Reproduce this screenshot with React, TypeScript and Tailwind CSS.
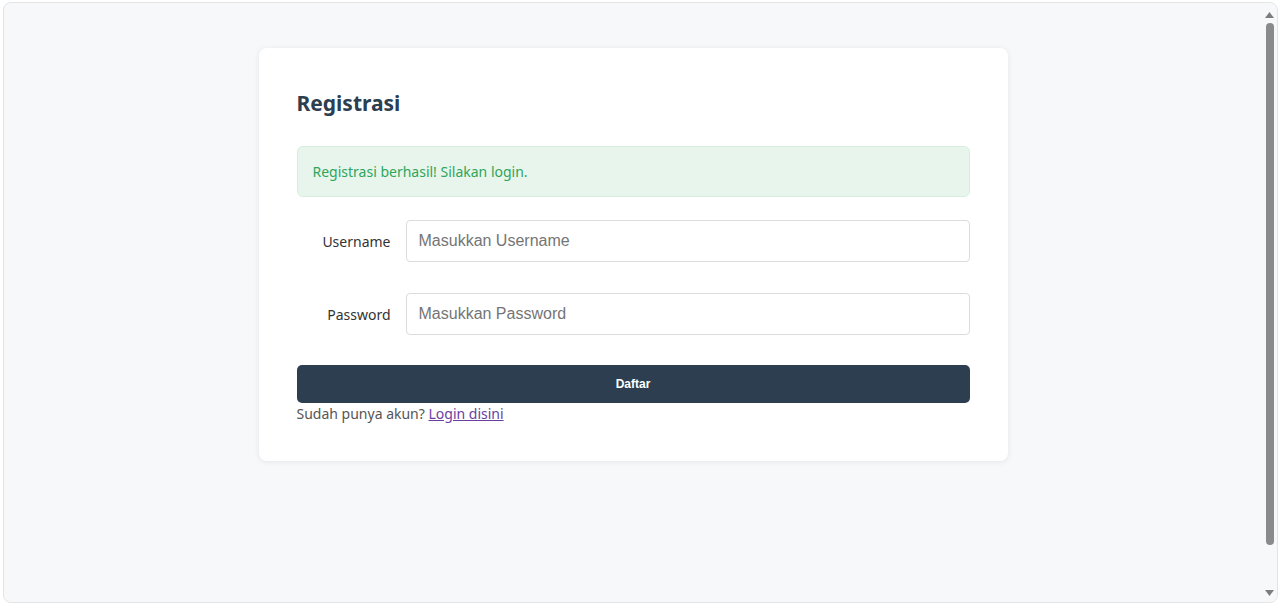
import React from "react";

export default function App() {
  return (
    <div className="h-[605px] w-[1280px] bg-white p-[2px] pl-[3px] pr-[2px]" style={{ fontFamily: '"Noto Sans", "Open Sans", sans-serif' }}>
      <div className="flex h-full w-full overflow-hidden rounded-[8px] border border-[#e3e4e6] bg-[#f7f8fa]">
        <div className="flex flex-1 justify-center pt-[45px]">
          <div className="h-[413px] w-[749px] rounded-[8px] bg-white px-[38px] pt-[40px] shadow-[0_1px_6px_rgba(0,0,0,0.08)]">
            <h2 className="text-[21px] font-bold leading-[30px] text-[#2c3e50]">Registrasi</h2>
            <div className="mt-[28px] flex h-[51px] items-center rounded-[6px] border border-[#d5eedd] bg-[#e8f5ec] px-[15px] text-[14px] text-[#2ea55a]">
              Registrasi berhasil! Silakan login.
            </div>
            <div className="mt-[23px] flex items-center gap-[15px]">
              <label className="w-[94px] text-right text-[14px] text-[#333]">Username</label>
              <input
                className="h-[42px] flex-1 rounded-[4px] border border-[#dcdcdc] px-[12px] text-[16px] text-[#333] outline-none placeholder:text-[#757575]"
                style={{ fontFamily: '"Liberation Sans", Arial, sans-serif' }}
                placeholder="Masukkan Username"
              />
            </div>
            <div className="mt-[31px] flex items-center gap-[15px]">
              <label className="w-[94px] text-right text-[14px] text-[#333]">Password</label>
              <input
                type="password"
                className="h-[42px] flex-1 rounded-[4px] border border-[#dcdcdc] px-[12px] text-[16px] text-[#333] outline-none placeholder:text-[#757575]"
                style={{ fontFamily: '"Liberation Sans", Arial, sans-serif' }}
                placeholder="Masukkan Password"
              />
            </div>
            <button
              className="mt-[30px] flex h-[38px] w-full items-center justify-center rounded-[5px] bg-[#2c3e50] text-[12px] font-bold text-white"
              style={{ fontFamily: '"Liberation Sans", Arial, sans-serif' }}
            >
              Daftar
            </button>
            <p className="text-[14px] leading-[22px] text-[#555]">
              Sudah punya akun? <a href="#" className="text-[#6a3ea1] underline">Login disini</a>
            </p>
          </div>
        </div>
        <div className="flex w-[15px] flex-col items-center bg-[#f7f8fa] py-[4px]">
          <svg width="9" height="6" viewBox="0 0 9 6" className="mt-[5px]"><path d="M0 6 L4.5 0 L9 6 Z" fill="#7d7d7d" /></svg>
          <div className="mt-[5px] h-[522px] w-[8px] rounded-full bg-[#8a8a8a]" />
          <div className="flex-1" />
          <svg width="9" height="6" viewBox="0 0 9 6" className="mb-[2px]"><path d="M0 0 L9 0 L4.5 6 Z" fill="#7d7d7d" /></svg>
        </div>
      </div>
    </div>
  );
}
